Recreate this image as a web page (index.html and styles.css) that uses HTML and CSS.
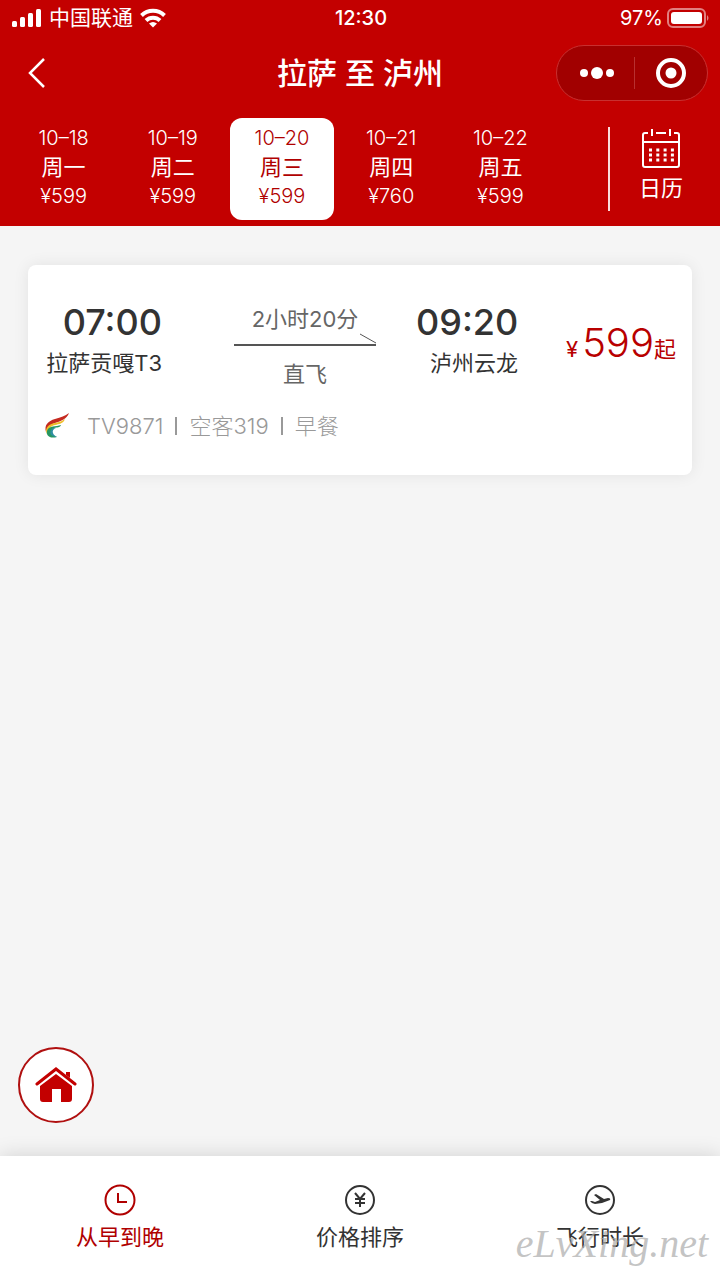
FILE: index.html
```
<!DOCTYPE html>
<html lang="zh-CN">
  <head>
    <meta charset="UTF-8" />
    <meta name="viewport" content="width=device-width, initial-scale=1.0" />
    <title>拉萨 至 泸州</title>
    <link rel="stylesheet" href="styles.css">
  </head>
  <body>
    <header class="header">
      <!-- 状态栏 -->
      <div class="status">
        <div class="status-left">
          <svg width="30" height="20" viewBox="0 0 30 20" fill="#fff">
            <rect x="0" y="13" width="5" height="6" rx="1.5" />
            <rect x="8" y="9" width="5" height="10" rx="1.5" />
            <rect x="16" y="5" width="5" height="14" rx="1.5" />
            <rect x="24" y="1" width="5" height="18" rx="1.5" />
          </svg>
          <span>中国联通</span>
          <svg width="26" height="20" viewBox="0 0 26 20" fill="none" stroke="#fff" stroke-width="4">
            <path d="M1.500 7.500A16.500 16.500 0 0 1 24.500 7.500" />
            <path d="M6 12.500A10 10 0 0 1 20 12.500" />
            <path d="M13 19.500L9 15.500Q13 12.500 17 15.500Z" fill="#fff" stroke="none" />
          </svg>
        </div>
        <div class="status-time">12:30</div>
        <div class="status-right">
          <span>97%</span>
          <svg width="43" height="20" viewBox="0 0 43 20">
            <rect x="1" y="1" width="37" height="18" rx="5" fill="none" stroke="#fff" stroke-opacity=".5" stroke-width="2" />
            <rect x="4" y="4" width="31" height="12" rx="3" fill="#fff" />
            <path d="M40 7Q43 10 40 13Z" fill="#fff" fill-opacity=".5" />
          </svg>
        </div>
      </div>

      <!-- 导航 -->
      <div class="nav">
        <button class="back" aria-label="返回">
          <svg width="18" height="30" viewBox="0 0 18 30" fill="none" stroke="#fff" stroke-width="2.500">
            <path d="M16 1L2 15L16 29" />
          </svg>
        </button>
        <h1 class="title">拉萨 至 泸州</h1>
        <div class="capsule">
          <button class="more" aria-label="更多">
            <svg width="34" height="12" viewBox="0 0 34 12" fill="#fff">
              <circle cx="4" cy="6" r="4" />
              <circle cx="17" cy="6" r="6" />
              <circle cx="30" cy="6" r="4" />
            </svg>
          </button>
          <button class="close" aria-label="关闭">
            <svg width="32" height="32" viewBox="0 0 32 32">
              <circle cx="16" cy="16" r="13" fill="none" stroke="#fff" stroke-width="4" />
              <circle cx="16" cy="16" r="5.500" fill="#fff" />
            </svg>
          </button>
        </div>
      </div>

      <!-- 日期 -->
      <div class="dates">
        <div class="days">
          <button class="day"><span>10–18</span><b>周一</b><span>¥599</span></button>
          <button class="day"><span>10–19</span><b>周二</b><span>¥599</span></button>
          <button class="day active"><span>10–20</span><b>周三</b><span>¥599</span></button>
          <button class="day"><span>10–21</span><b>周四</b><span>¥760</span></button>
          <button class="day"><span>10–22</span><b>周五</b><span>¥599</span></button>
        </div>
        <button class="calendar">
          <svg width="40" height="40" viewBox="0 0 40 40" fill="none" stroke="#fff" stroke-width="2">
            <path d="M7 4H4Q2 4 2 6V36Q2 38 4 38H36Q38 38 38 36V6Q38 4 36 4H33M15 4H25M2 13H38M11 0V7M29 0V7" />
            <path d="M8 21H33M8 26H33M8 31H33" stroke-width="3" stroke-dasharray="3 4.300" />
          </svg>
          <span>日历</span>
        </button>
      </div>
    </header>

    <main class="main">
      <section class="card">
        <div class="flight">
          <div class="place">
            <div class="time">07:00</div>
            <div class="airport">拉萨贡嘎T3</div>
          </div>
          <div class="route">
            <div class="duration">2小时20分</div>
            <svg class="arrow" height="14" width="100%">
              <line x1="0" y1="12" x2="100%" y2="12" stroke="#555" stroke-width="2" />
              <svg x="100%" overflow="visible">
                <path d="M-16 1L0 10" fill="none" stroke="#555" />
              </svg>
            </svg>
            <div class="direct">直飞</div>
          </div>
          <div class="place">
            <div class="time">09:20</div>
            <div class="airport">泸州云龙</div>
          </div>
          <div class="price"><small>¥</small>599<em>起</em></div>
        </div>
        <div class="info">
          <svg width="26" height="26" viewBox="0 0 26 26">
            <path d="M25 0C23 6 17 8 11 10C6 12 3 14 2 19C0 12 4 8 11 6C17 4 21 3 25 0Z" fill="#c52a20" />
            <path d="M21 6C19 11 15 11 11 12C6 13 4 16 3 21C0 15 5 11 11 10C16 9 18 8 21 6Z" fill="#efbd27" />
            <path d="M17 12C16 15 13 14 10 15C6 17 6 22 13 24C5 26 2 22 3 18C5 12 12 14 17 12Z" fill="#279660" />
            <path d="M12 15C8 16 7 21 13 24C7 24 5 20 7 17Q9 14 12 15Z" fill="#2d8fa0" />
          </svg>
          <span>TV9871</span><i></i><span>空客319</span><i></i><span>早餐</span>
        </div>
      </section>

      <a class="home" href="#" aria-label="首页">
        <svg width="42" height="36" viewBox="0 0 42 36" fill="#c30000">
          <path d="M2 17L21 2L40 17" fill="none" stroke="#c30000" stroke-width="3" stroke-linecap="round" />
          <path d="M5 19L21 7L37 19V32Q37 35 34 35H26V22H17V35H8Q5 35 5 32Z" />
          <path d="M31 5H35V11L31 8Z" />
        </svg>
      </a>
    </main>

    <!-- 排序 -->
    <footer class="sort">
      <button class="active">
        <svg width="32" height="32" viewBox="0 0 32 32" fill="none" stroke="currentColor" stroke-width="2">
          <circle cx="16" cy="16" r="14.500" />
          <path d="M14 9V18H23" />
        </svg>
        <span>从早到晚</span>
      </button>
      <button>
        <svg width="32" height="32" viewBox="0 0 32 32" fill="none" stroke="currentColor" stroke-width="2">
          <circle cx="16" cy="16" r="14" />
          <path d="M11 9L16 15L21 9M16 15V23M11 15H21M11 19H21" />
        </svg>
        <span>价格排序</span>
      </button>
      <button>
        <svg width="32" height="32" viewBox="0 0 32 32" fill="none" stroke="currentColor" stroke-width="2">
          <circle cx="16" cy="16" r="14" />
          <path d="M6 17L8 17L11 18L16 16L10 11L12 10L20 15L24 14Q27 14 26 16L18 19L11 20Q8 20 6 17Z" fill="currentColor" stroke="none" />
        </svg>
        <span>飞行时长</span>
      </button>
      <div class="watermark">eLvXing.net</div>
    </footer>
  </body>
</html>
```
FILE: styles.css
```
* {
  margin: 0;
  padding: 0;
  box-sizing: border-box;
}
body {
  display: flex;
  flex-direction: column;
  min-height: 100vh;
  background-color: #f5f5f5;
  color: #333;
  font: 400 22px/32px Inter, "Noto Sans CJK SC", sans-serif;
}
button {
  border: 0;
  background: none;
  color: inherit;
  font: inherit;
  cursor: pointer;
}
svg {
  display: block;
  flex: none;
}

/* header */
.header {
  padding-bottom: 6px;
  background-color: #c30000;
  color: #fff;
}

.status {
  display: grid;
  grid-template-columns: 1fr auto 1fr;
  align-items: center;
  height: 36px;
  padding: 0 10px 0 12px;
  font-size: 20px;
}
.status-left {
  display: flex;
  align-items: center;
  gap: 7px;
  font-size: 21px;
}
.status-time {
  font-weight: 500;
}
.status-right {
  display: flex;
  align-items: center;
  justify-content: flex-end;
  gap: 4px;
}

.nav {
  display: grid;
  grid-template-columns: 1fr auto 1fr;
  align-items: center;
  padding: 9px 12px 0;
}
.back {
  justify-self: start;
  padding-left: 16px;
}
.title {
  font-size: 30px;
  font-weight: 500;
}
.capsule {
  display: flex;
  justify-self: end;
  width: 152px;
  height: 56px;
  padding: 11px 0;
  border: 1px solid #c83030;
  border-radius: 28px;
  background-color: #a10000;
}
.capsule button {
  display: flex;
  flex: 1;
  align-items: center;
  justify-content: center;
}
.more {
  padding-left: 4px;
}
.capsule .close {
  border-left: 1px solid #b83030;
}

.dates {
  display: flex;
  align-items: center;
  margin-top: 17px;
}
.days {
  display: grid;
  flex: 1;
  grid-template-columns: repeat(5, 1fr);
  gap: 6px;
  padding: 0 56px 0 12px;
}
.day {
  display: flex;
  flex-direction: column;
  align-items: center;
  height: 102px;
  padding-top: 5px;
  border-radius: 12px;
  font-size: 20px;
  font-weight: 300;
  line-height: 30px;
}
.day b {
  font-size: 22px;
  font-weight: 400;
  line-height: 28px;
}
.day.active {
  background-color: #fff;
  color: #b00000;
}
.calendar {
  display: flex;
  flex-direction: column;
  align-items: center;
  width: 112px;
  height: 84px;
  padding: 2px 8px 0 0;
  border-left: 2px solid #fbdcdc;
}
.calendar span {
  line-height: 38px;
}
/* header end */

.main {
  display: flex;
  flex: 1;
  flex-direction: column;
  padding: 39px 28px 33px;
}

/* card */
.card {
  padding: 33px 16px;
  border-radius: 8px;
  background-color: #fff;
  box-shadow: 0 0 16px rgba(0, 0, 0, 0.08);
}
.flight {
  display: grid;
  grid-template-columns: 118px 1fr 102px 158px;
}
.place {
  text-align: right;
  white-space: nowrap;
}
.time {
  font-size: 36px;
  font-weight: 500;
  line-height: 48px;
}
.airport {
  line-height: 34px;
}
.route {
  padding: 7px 40px 0 72px;
  color: #666;
  text-align: center;
  white-space: nowrap;
}
.duration {
  line-height: 28px;
}
.arrow {
  margin-bottom: 11px;
}
.price {
  align-self: center;
  padding-top: 4px;
  color: #b80000;
  font-size: 40px;
  font-weight: 300;
  line-height: 48px;
  text-align: right;
}
.price small {
  margin-right: 4px;
  font-size: 22px;
  font-weight: 400;
}
.price em {
  font-size: 22px;
  font-style: normal;
  font-weight: 400;
}
.info {
  display: flex;
  align-items: center;
  margin-top: 20px;
  color: #999;
  font-weight: 300;
}
.info svg {
  margin-right: 17px;
}
.info i {
  width: 2px;
  height: 18px;
  margin: 0 12px;
  background-color: #999;
}
/* card end */

.home {
  display: flex;
  align-items: center;
  justify-content: center;
  width: 76px;
  height: 76px;
  margin: auto 0 0 -10px;
  border: 2px solid #b01010;
  border-radius: 50%;
  background-color: #fff;
}

/* sort */
.sort {
  position: relative;
  display: grid;
  grid-template-columns: repeat(3, 1fr);
  padding: 28px 0 26px;
  background-color: #fff;
  box-shadow: 0 0 20px rgba(0, 0, 0, 0.15);
}
.sort button {
  display: flex;
  flex-direction: column;
  align-items: center;
  gap: 4px;
  line-height: 34px;
}
.sort .active {
  color: #b00000;
}
.watermark {
  position: absolute;
  right: 12px;
  bottom: 12px;
  color: rgba(170, 170, 170, 0.7);
  font: italic 40px/48px "Liberation Serif", serif;
}
/* sort end */
```
